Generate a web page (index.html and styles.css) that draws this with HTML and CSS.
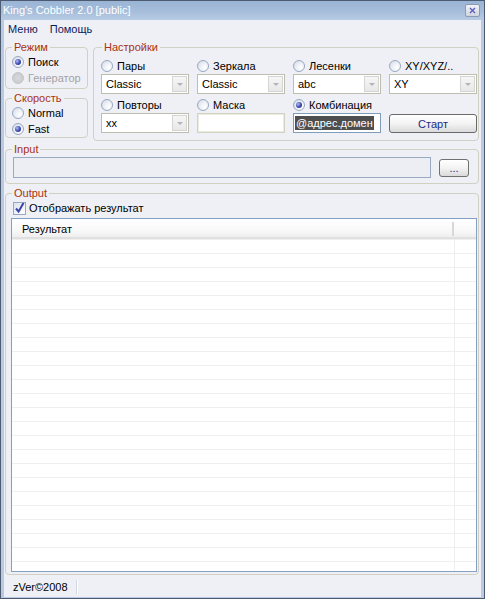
FILE: index.html
```html
<!DOCTYPE html>
<html lang="ru">
<head>
<meta charset="UTF-8" />
<meta name="viewport" content="width=device-width, initial-scale=1" />
<link rel="stylesheet" href="styles.css">
</head>
<body>

<div class="window">
  <div class="titlebar">
    <span class="title">King's Cobbler 2.0 [public]</span>
    <span class="close-btn">
      <svg width="7" height="7" viewBox="0 0 7 7"><path d="M1 1 L6 6 M6 1 L1 6" stroke="#5b5fc0" stroke-width="1.4" /></svg>
    </span>
  </div>

  <div class="frame">
    <div class="client">
      <div class="menubar">
        <span class="menu-item">Меню</span>
        <span class="menu-item">Помощь</span>
      </div>

      <div class="top">
        <div class="leftcol">
          <fieldset class="group mode">
            <legend>Режим</legend>
            <div class="opt-row"><span class="rb on"></span>Поиск</div>
            <div class="opt-row disabled"><span class="rb off"></span>Генератор</div>
          </fieldset>
          <fieldset class="group speed">
            <legend>Скорость</legend>
            <div class="opt-row"><span class="rb"></span>Normal</div>
            <div class="opt-row"><span class="rb on"></span>Fast</div>
          </fieldset>
        </div>

        <fieldset class="group settings">
          <legend>Настройки</legend>
          <div class="settings-grid">
            <div class="opt">
              <div class="opt-label"><span class="rb"></span>Пары</div>
              <div class="combo"><span class="combo-text">Classic</span><span class="combo-arrow"><i></i></span></div>
            </div>
            <div class="opt">
              <div class="opt-label"><span class="rb"></span>Зеркала</div>
              <div class="combo"><span class="combo-text">Classic</span><span class="combo-arrow"><i></i></span></div>
            </div>
            <div class="opt">
              <div class="opt-label"><span class="rb"></span>Лесенки</div>
              <div class="combo"><span class="combo-text">abc</span><span class="combo-arrow"><i></i></span></div>
            </div>
            <div class="opt">
              <div class="opt-label"><span class="rb"></span>XY/XYZ/..</div>
              <div class="combo"><span class="combo-text">XY</span><span class="combo-arrow"><i></i></span></div>
            </div>

            <div class="opt">
              <div class="opt-label"><span class="rb"></span>Повторы</div>
              <div class="combo"><span class="combo-text">xx</span><span class="combo-arrow"><i></i></span></div>
            </div>
            <div class="opt">
              <div class="opt-label"><span class="rb"></span>Маска</div>
              <div class="textbox plain"></div>
            </div>
            <div class="opt">
              <div class="opt-label"><span class="rb on"></span>Комбинация</div>
              <div class="textbox active"><span class="selected">@адрес.домен</span></div>
            </div>
            <div class="opt">
              <div class="opt-label"></div>
              <div class="button start">Старт</div>
            </div>
          </div>
        </fieldset>
      </div>

      <fieldset class="group input">
        <legend>Input</legend>
        <div class="input-row">
          <div class="textbox path"></div>
          <div class="button browse">...</div>
        </div>
      </fieldset>

      <fieldset class="group output">
        <legend>Output</legend>
        <div class="check-row">
          <span class="cb">
            <svg width="11" height="12" viewBox="0 0 11 12"><path d="M2 6.5 L4.6 9.5 L9.5 1" fill="none" stroke="#3a45a8" stroke-width="2" /></svg>
          </span>
          Отображать результат
        </div>
        <div class="listview">
          <div class="lv-header">
            <span class="lv-col first">Результат</span>
            <span class="lv-col rest"></span>
          </div>
          <div class="lv-body"></div>
        </div>
      </fieldset>

      <div class="statusbar">
        <span class="status-cell">zVer©2008</span>
      </div>
    </div>
  </div>
</div>

</body>
</html>
```

FILE: styles.css
```css
body {
  margin: 0;
  background: #fff;
  font-family: "Liberation Sans", Arial, sans-serif;
  font-size: 11px;
  color: #000;
}

.window {
  width: 485px;
  height: 599px;
  box-sizing: border-box;
  border: 1px solid #4e5a70;
  background: #b8cbe3;
  display: flex;
  flex-direction: column;
}

.titlebar {
  height: 19px;
  flex: none;
  display: flex;
  align-items: center;
  justify-content: space-between;
  padding: 0 4px 0 2px;
  background: linear-gradient(to bottom, #9ab4d5 0%, #a6bedb 55%, #b7cbe4 100%);
}

.title {
  color: #fff;
  font-size: 11px;
  line-height: 13px;
}

.close-btn {
  width: 15px;
  height: 13px;
  box-sizing: border-box;
  border: 1px solid #8c9ab3;
  border-radius: 2px;
  background: linear-gradient(to bottom, #f2f3f7, #cfd4de);
  display: flex;
  align-items: center;
  justify-content: center;
}

.frame {
  flex: 1;
  padding: 0 3px 1px;
  display: flex;
}

.client {
  flex: 1;
  background: #eff0f6;
  display: flex;
  flex-direction: column;
  min-height: 0;
}

/* menu */
.menubar {
  height: 18px;
  flex: none;
  display: flex;
  align-items: center;
  gap: 12px;
  padding-left: 4px;
  color: #0e1a5a;
}

/* group boxes */
.group {
  margin: 0 2px 0 1px;
  padding: 0;
  border: 1px solid #d0d0c4;
  border-radius: 4px;
  min-width: 0;
}

.group legend {
  padding: 0 2px;
  line-height: 13px;
  color: #a8330f;
}

.top {
  display: flex;
  margin-top: 3px;
  height: 100px;
  flex: none;
}

.leftcol {
  width: 83px;
  margin-left: 1px;
  display: flex;
  flex-direction: column;
  gap: 3px;
}

.leftcol .group {
  margin: 0;
  padding: 0 0 0 6px;
}

.mode {
  padding-bottom: 2px !important;
}

.opt-row {
  height: 16px;
  display: flex;
  align-items: center;
  gap: 4px;
}

.opt-row.disabled {
  color: #a3a3a3;
}

/* radios */
.rb {
  width: 12px;
  height: 12px;
  box-sizing: border-box;
  flex: none;
  border-radius: 50%;
  border: 1px solid #98a7c3;
  background: radial-gradient(circle at 70% 70%, #ffffff 0, #f2f4f8 35%, #d2d9e6 100%);
  display: grid;
  place-items: center;
}

.rb.on::after {
  content: "";
  width: 6px;
  height: 6px;
  border-radius: 50%;
  background: radial-gradient(circle at 35% 35%, #b3bff2, #3a47ad 55%, #1e2682);
}

.rb.off {
  border-color: #c4c5c9;
  background: radial-gradient(circle, #d8d9dc, #c6c7cb);
}

/* settings */
.settings {
  flex: 1;
  margin-left: 5px;
  padding: 5px 1px 7px 7px;
}

.settings legend {
  margin-left: 1px;
}

.settings-grid {
  display: grid;
  grid-template-columns: repeat(4, 88px);
  column-gap: 8px;
  row-gap: 4px;
}

.opt-label {
  height: 14px;
  display: flex;
  align-items: center;
  gap: 4px;
  white-space: nowrap;
}

.combo {
  margin-top: 1px;
  height: 20px;
  box-sizing: border-box;
  border: 1px solid #bdbdb0;
  background: #fff;
  display: flex;
  align-items: stretch;
}

.combo-text {
  flex: 1;
  padding-left: 4px;
  line-height: 18px;
}

.combo-arrow {
  width: 15px;
  margin: 1px;
  box-sizing: border-box;
  border: 1px solid #d4d4d0;
  background: linear-gradient(to bottom, #f6f6f6, #e8e8e8);
  display: flex;
  align-items: center;
  justify-content: center;
}

.combo-arrow i {
  width: 0;
  height: 0;
  border-left: 3px solid transparent;
  border-right: 3px solid transparent;
  border-top: 3px solid #b4b4b4;
}

.textbox {
  box-sizing: border-box;
  background: #fff;
}

.textbox.plain {
  margin-top: 1px;
  height: 20px;
  border: 1px solid #d2d2c4;
  box-shadow: inset 0 0 0 1px #ececdf;
}

.textbox.active {
  margin-top: 1px;
  height: 20px;
  border: 1px solid #7f9db9;
  padding: 2px 0 0 1px;
}

.selected {
  display: inline-block;
  background: #4e4e4e;
  color: #fff;
  line-height: 14px;
  padding: 0 1px;
}

.button {
  box-sizing: border-box;
  border: 1px solid #6a6a6a;
  border-radius: 3px;
  background: linear-gradient(to bottom, #ffffff 0%, #f3f3f3 50%, #dadada 100%);
  color: #1b2a86;
  display: flex;
  align-items: center;
  justify-content: center;
}

.button.start {
  margin-top: 2px;
  height: 19px;
}

/* input */
.input {
  flex: none;
  margin-top: 2px;
  padding: 1px 9px 5px 7px;
}

.input legend {
  margin-left: -1px;
}

.input-row {
  display: flex;
  align-items: center;
}

.textbox.path {
  flex: 1;
  height: 21px;
  border: 1px solid #9aaac0;
  background: #eceef3;
}

.button.browse {
  width: 30px;
  height: 18px;
  margin-left: 8px;
  border-color: #707070;
  line-height: 10px;
}

/* output */
.output {
  flex: 1;
  margin-top: 3px;
  padding: 0 1px 2px 5px;
  display: flex;
  flex-direction: column;
  min-height: 0;
}

.output legend {
  margin-left: 1px;
}

.check-row {
  height: 16px;
  display: flex;
  align-items: center;
  gap: 3px;
  padding-left: 2px;
}

.cb {
  width: 13px;
  height: 13px;
  box-sizing: border-box;
  border: 1px solid #9aa6c2;
  background: linear-gradient(135deg, #dde2ec, #ffffff);
  display: flex;
  align-items: flex-end;
  justify-content: center;
}

.listview {
  flex: 1;
  margin-top: 2px;
  border: 1px solid #86a0c4;
  background: #fff;
  display: flex;
  flex-direction: column;
}

.lv-header {
  height: 20px;
  box-sizing: border-box;
  flex: none;
  display: flex;
  border-bottom: 2px solid #e0e0e0;
  background: linear-gradient(to bottom, #ffffff 0%, #f9f9f9 60%, #efefef 100%);
}

.lv-col.first {
  width: 442px;
  box-sizing: border-box;
  padding-left: 10px;
  line-height: 20px;
  border-right: 2px solid #d8d8d8;
  margin: 3px 0 1px;
  line-height: 14px;
}

.lv-col.rest {
  flex: 1;
}

.lv-body {
  flex: 1;
  background-image:
    linear-gradient(to right, transparent 442px, #efefef 442px, #efefef 443px, transparent 443px),
    linear-gradient(to bottom, transparent 13px, #efefef 13px);
  background-size: 100% 100%, 100% 14px;
  background-repeat: no-repeat, repeat;
  background-position: 0 0, 0 1px;
}

/* status */
.statusbar {
  height: 21px;
  flex: none;
  margin-top: 1px;
  display: flex;
  align-items: center;
}

.status-cell {
  width: 63px;
  padding-left: 9px;
  line-height: 14px;
  border-right: 1px solid #d2d7e3;
  box-shadow: 1px 0 0 #fff;
  margin: 3px 0;
  line-height: 14px;
}
```
